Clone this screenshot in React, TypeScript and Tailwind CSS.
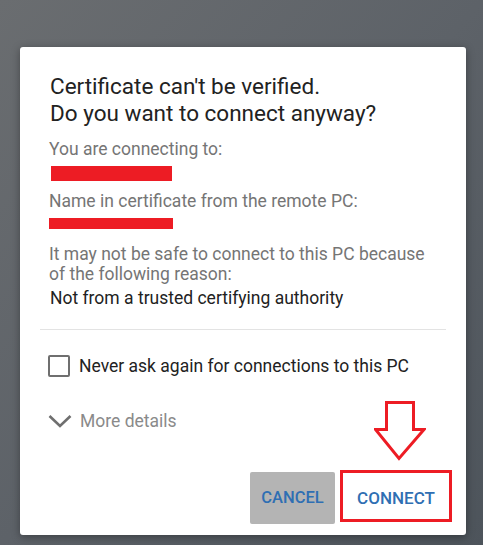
import { useState } from "react";

export default function App() {
  const [neverAsk, setNeverAsk] = useState(false);

  return (
    <div className="w-[483px] h-[545px] overflow-hidden bg-gradient-to-br from-[#6a6d70] via-[#5d6268] to-[#4d545b] pt-[47px] pl-[20px] font-['Roboto','Liberation_Sans',sans-serif]">
      <div className="w-[446px] h-[488px] bg-white rounded-[3px] shadow-[0_2px_8px_rgba(0,0,0,0.35)] flex flex-col">
        {/* Title */}
        <div className="pt-[26px] pl-[30px] text-[22.5px] leading-[27px] text-[#222222]">
          <div>Certificate can&apos;t be verified.</div>
          <div>Do you want to connect anyway?</div>
        </div>

        {/* Info */}
        <div className="pl-[29px] pr-[10px] text-[17.5px] leading-[20px] whitespace-nowrap">
          <div className="mt-[12px] text-[#757575]">You are connecting to:</div>
          <div className="mt-[7px] ml-[2px] w-[121px] h-[15px] bg-[#ed1c24]" />
          <div className="mt-[10px] text-[#757575]">Name in certificate from the remote PC:</div>
          <div className="mt-[7px] w-[124px] h-[11px] bg-[#ed1c24]" />
          <div className="mt-[15px] text-[#757575]">
            It may not be safe to connect to this PC because
            <br />
            of the following reason:
          </div>
          <div className="mt-[4px] ml-[1px] text-[#222222]">Not from a trusted certifying authority</div>
        </div>

        <div className="mt-[21px] mx-[20px] h-px bg-[#e3e3e3]" />

        {/* Checkbox */}
        <label className="mt-[25px] pl-[28px] flex items-center gap-[9px] cursor-pointer">
          <span
            onClick={() => setNeverAsk(!neverAsk)}
            className="w-[22px] h-[22px] border-2 border-[#6f6f6f] rounded-[2px] flex items-center justify-center"
          >
            {neverAsk && (
              <svg width="16" height="16" viewBox="0 0 24 24" fill="none" stroke="#6f6f6f" strokeWidth="3">
                <path d="M4 12l5 5L20 6" />
              </svg>
            )}
          </span>
          <span className="text-[17.5px] leading-[20px] text-[#222222] whitespace-nowrap">
            Never ask again for connections to this PC
          </span>
        </label>

        {/* More details */}
        <div className="mt-[34px] pl-[28px] flex items-center gap-[8px]">
          <svg width="24" height="14" viewBox="0 0 24 14" fill="none" stroke="#6f6f6f" strokeWidth="2.6">
            <path d="M1.5 2l10.5 10L22.5 2" />
          </svg>
          <span className="text-[17.5px] leading-[20px] text-[#8a8a8a]">More details</span>
        </div>

        {/* Buttons */}
        <div className="mt-[39px] flex items-start pl-[230px] relative">
          <button className="mt-[2px] w-[85px] h-[52px] bg-[#b4b4b4] rounded-[2px] text-[#2f6fb3] text-[16.5px] font-medium">
            CANCEL
          </button>
          <button className="ml-[5px] w-[112px] h-[52px] pt-[5px] border-[3px] border-[#ed1c24] text-[#2f6fb3] text-[17px] font-medium">
            CONNECT
          </button>
          <svg
            className="absolute left-[354px] top-[-69px]"
            width="52"
            height="60"
            viewBox="0 0 52 60"
            fill="none"
            stroke="#ed1c24"
            strokeWidth="3"
          >
            <path d="M12.5 1.5h27v27h10.5L25 57.5 1.5 28.5h11z" />
          </svg>
        </div>
      </div>
    </div>
  );
}
